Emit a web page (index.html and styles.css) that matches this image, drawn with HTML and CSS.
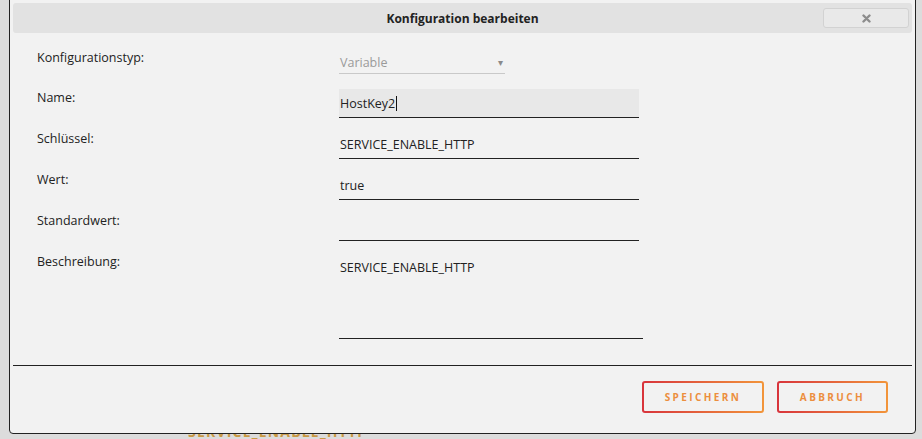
FILE: index.html
```html
<!DOCTYPE html>
<html lang="de">
<head>
    <meta charset="UTF-8">
    <meta name="viewport" content="width=device-width, initial-scale=1.0">
    <title>Konfiguration bearbeiten</title>
    <link rel="stylesheet" href="styles.css">
</head>
<body>
    <!-- page content behind the modal -->
    <span class="backdrop-text">SERVICE_ENABLE_HTTP</span>

    <div class="dialog">
        <div class="dialog-head">
            <span></span>
            <h1>Konfiguration bearbeiten</h1>
            <button class="close-btn" title="Schließen">
                <svg width="9" height="9" viewBox="0 0 9 9">
                    <path d="M1.5 1.5 L7.5 7.5 M7.5 1.5 L1.5 7.5" stroke="#8c8c8c" stroke-width="2.4" stroke-linecap="round"/>
                </svg>
            </button>
        </div>

        <div class="form">
            <label>Konfigurationstyp:</label>
            <div class="select">
                <span>Variable</span>
                <span class="arrow">&#9662;</span>
            </div>

            <label>Name:</label>
            <div class="field active">HostKey2<span class="caret"></span></div>

            <label>Schlüssel:</label>
            <div class="field">SERVICE_ENABLE_HTTP</div>

            <label>Wert:</label>
            <div class="field">true</div>

            <label>Standardwert:</label>
            <div class="field"></div>

            <label>Beschreibung:</label>
            <div class="field area">SERVICE_ENABLE_HTTP</div>
        </div>

        <div class="footer">
            <button class="btn save-btn">SPEICHERN</button>
            <button class="btn cancel-btn">ABBRUCH</button>
        </div>
    </div>
</body>
</html>
```

FILE: styles.css
```css
body {
    font-family: 'Open Sans', sans-serif;
    margin: 0;
    padding: 0;
    height: 439px;
    overflow: hidden;
    background: #dcdcdc;
    color: #222;
}
.backdrop-text {
    position: absolute;
    left: 188px;
    top: 423px;
    font-size: 14px;
    line-height: 18px;
    font-weight: bold;
    letter-spacing: 1.2px;
    color: #c99a45;
}
.dialog {
    position: relative;
    box-sizing: border-box;
    width: 907px;
    height: 435px;
    margin: -1px 0 0 9px;
    padding: 3px 3px 0;
    background: #f2f2f2;
    border: 1px solid #222;
    border-radius: 0 0 4px 4px;
}
.dialog-head {
    display: grid;
    grid-template-columns: 1fr auto 1fr;
    align-items: center;
    height: 30px;
    background: #e2e2e2;
    border-radius: 3px;
}
.dialog-head h1 {
    margin: 0;
    font-size: 12px;
    font-weight: bold;
}
.close-btn {
    justify-self: end;
    width: 86px;
    height: 20px;
    margin-right: 3px;
    padding: 0;
    border: 1px solid #d2d2d2;
    border-radius: 3px;
    background: #e9e9e9;
    display: flex;
    align-items: center;
    justify-content: center;
}
.form {
    display: grid;
    grid-template-columns: 302px 304px;
    row-gap: 12px;
    align-items: start;
    padding: 16px 0 0 24px;
}
.form label {
    font-size: 12.5px;
    line-height: 17px;
}
.select {
    box-sizing: border-box;
    width: 166px;
    height: 25px;
    margin-bottom: 3px;
    padding: 2px 2px 0 1px;
    display: flex;
    align-items: center;
    justify-content: space-between;
    border-bottom: 1px solid #c9c9c9;
    font-size: 12.5px;
    color: #9a9a9a;
}
.select .arrow {
    font-size: 10px;
    color: #8a8a8a;
}
.field {
    box-sizing: border-box;
    width: 300px;
    height: 29px;
    padding: 6px 1px 0;
    border-bottom: 1px solid #222;
    font-size: 12.5px;
    line-height: 17px;
}
.field.active {
    background: #e8e8e8;
}
.caret {
    display: inline-block;
    width: 1px;
    height: 15px;
    margin-left: 1px;
    vertical-align: -3px;
    background: #111;
}
.field.area {
    width: 304px;
    height: 86px;
}
.footer {
    display: flex;
    justify-content: flex-end;
    gap: 13px;
    margin-top: 26px;
    padding: 15px 24px 0 0;
    border-top: 1px solid #222;
}
.btn {
    height: 32px;
    padding: 0;
    border: 2px solid transparent;
    border-radius: 3px;
    background: linear-gradient(#f2f2f2, #f2f2f2) padding-box,
                linear-gradient(to right, #d8343c, #f2953a) border-box;
    font-family: 'Open Sans', sans-serif;
    font-size: 10px;
    font-weight: bold;
    letter-spacing: 2.4px;
    color: #ec8e3e;
    cursor: pointer;
}
.save-btn {
    width: 122px;
}
.cancel-btn {
    width: 111px;
}
```
